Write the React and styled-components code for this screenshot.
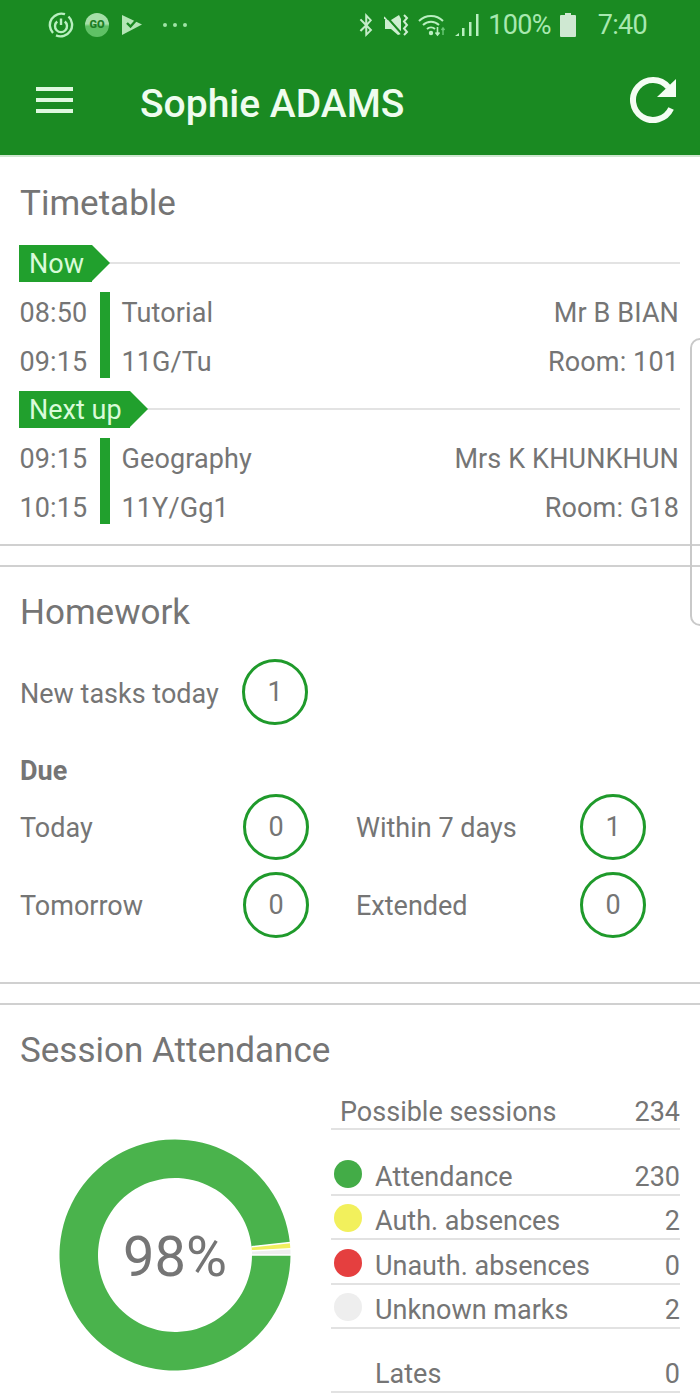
import React from "react";
import styled, { createGlobalStyle } from "styled-components";
import { FaBluetoothB } from "react-icons/fa";

const GlobalStyle = createGlobalStyle`
  html, body {
    margin: 0;
    padding: 0;
    background: #fff;
    overflow: hidden;
  }
  body {
    font-family: Roboto, "Liberation Sans", sans-serif;
    color: #757575;
  }
`;

const polar = (r, deg) => {
  const a = (deg * Math.PI) / 180;
  return [r * Math.cos(a), r * Math.sin(a)];
};

// ring slice, angles clockwise from 3 o'clock
const slicePath = (from, to, outer, inner) => {
  const [x1, y1] = polar(outer, from);
  const [x2, y2] = polar(outer, to);
  const [x3, y3] = polar(inner, to);
  const [x4, y4] = polar(inner, from);
  const large = to - from > 180 ? 1 : 0;
  return `M${x1} ${y1}A${outer} ${outer} 0 ${large} 1 ${x2} ${y2}L${x3} ${y3}A${inner} ${inner} 0 ${large} 0 ${x4} ${y4}Z`;
};

const PowerIcon = () => (
  <svg width="26" height="26" viewBox="0 0 26 26" fill="none" stroke="#b9efc0" strokeWidth="2.4">
    <path d="M20.500 4.500A11.500 11.500 0 0 1 8 23.400" />
    <path d="M5 21A11.500 11.500 0 0 1 17 2.200" />
    <path d="M16.800 9.500a6 6 0 1 1-7.600 0" />
    <path d="M13 6.500v6.500" />
  </svg>
);

const FlagIcon = () => (
  <svg width="22" height="22" viewBox="0 0 22 22">
    <path d="M1 1l20 9.500L1 21z" fill="#b4e6b6" />
    <path d="M6 9l3.500 3.500L18 3" fill="none" stroke="#1a8a22" strokeWidth="2.400" />
  </svg>
);

const MuteIcon = () => (
  <svg width="25" height="24" viewBox="0 0 25 24" fill="none">
    <path d="M1 7l6 0 8-5 2 4v15l-3 1-7-6H1z" fill="#cdeed0" />
    <path d="M1 2l17 19" stroke="#1a8a22" strokeWidth="2" />
    <path d="M0 4l14 16" stroke="#cdeed0" strokeWidth="1.500" />
    <path d="M20 2l3 3-3 3.500 3 3.500-3 3.500 3 3.500-3 3" stroke="#cdeed0" strokeWidth="2" />
  </svg>
);

const WifiIcon = () => (
  <svg width="28" height="26" viewBox="0 0 28 26" fill="none" stroke="#b9efc0" strokeWidth="2">
    <path d="M1 9a17 17 0 0 1 24 0" />
    <path d="M5 13a11.500 11.500 0 0 1 16 0" />
    <path d="M9 17a6 6 0 0 1 8 0" />
    <circle cx="13" cy="21" r="1.200" fill="#b9efc0" />
    <path d="M19.500 15v8M17.500 20.500l2 2.500 2-2.500" strokeWidth="1.600" />
    <path d="M25 23v-7M23.500 18l1.500-2 1.500 2" stroke="#6cc878" strokeWidth="1.400" />
  </svg>
);

const SignalIcon = () => (
  <svg width="24" height="24" viewBox="0 0 24 24" fill="#b9efc0">
    <path d="M0 23l4-3v3z" />
    <rect x="7" y="15" width="2.500" height="8" />
    <rect x="14" y="9" width="2.500" height="14" />
    <rect x="21" y="1" width="2.500" height="22" />
  </svg>
);

const BatteryIcon = () => (
  <svg width="16" height="24" viewBox="0 0 16 24" fill="#cfe8d2">
    <path d="M5 0h6v2h4a1 1 0 0 1 1 1v20a1 1 0 0 1-1 1H1a1 1 0 0 1-1-1V3a1 1 0 0 1 1-1h4z" />
  </svg>
);

const RefreshIcon = () => (
  <RefreshSvg width="50" height="50" viewBox="0 0 50 50" fill="none">
    <path d="M38.300 11.100A20 20 0 1 0 41.100 32.500" stroke="#f4fdf3" strokeWidth="6" />
    <path d="M46 3v18H27z" fill="#f4fdf3" />
  </RefreshSvg>
);

const GREEN = "#21a02d";

function Lesson({ label, start, end, subject, group, teacher, room }) {
  return (
    <>
      <TagRow>
        <Tag>{label}</Tag>
      </TagRow>
      <LessonRow>
        <Times>
          <span>{start}</span>
          <span>{end}</span>
        </Times>
        <LessonBar />
        <LessonInfo>
          <InfoLine>
            <span>{subject}</span>
            <span>{teacher}</span>
          </InfoLine>
          <InfoLine>
            <span>{group}</span>
            <span>{room}</span>
          </InfoLine>
        </LessonInfo>
      </LessonRow>
    </>
  );
}

function Count({ label, value, width }) {
  return (
    <CountCell $width={width}>
      <CountLabel>{label}</CountLabel>
      <Circle>{value}</Circle>
    </CountCell>
  );
}

function Donut() {
  const step = 360 / 234;
  const yellowEnd = -2 * step;
  const greenStart = -4 * step;
  return (
    <svg width="232" height="232" viewBox="-116 -116 232 232">
      <path d={slicePath(0, 360 + greenStart, 115.5, 77)} fill="#4ab34c" />
      <path d={slicePath(greenStart, yellowEnd, 115.5, 77)} fill="#f2ef5e" />
      <path d={slicePath(yellowEnd, 0, 115.5, 77)} fill="#eeeeee" />
      <path d={`M77 0L116 0M${polar(77, yellowEnd)}L${polar(116, yellowEnd)}M${polar(77, greenStart)}L${polar(116, greenStart)}`} stroke="#fff" strokeWidth="1.500" />
    </svg>
  );
}

function StatRow({ dot, label, value }) {
  return (
    <Stat>
      <DotSlot>{dot && <Dot $color={dot} />}</DotSlot>
      <span>{label}</span>
      <StatValue>{value}</StatValue>
    </Stat>
  );
}

export default function App() {
  return (
    <Page>
      <GlobalStyle />
      <TopBar>
        <StatusBar>
          <StatusLeft>
            <PowerIcon />
            <GoBadge>GO</GoBadge>
            <FlagIcon />
            <Dots>
              <i />
              <i />
              <i />
            </Dots>
          </StatusLeft>
          <StatusRight>
            <BluetoothIcon />
            <MuteIcon />
            <WifiIcon />
            <SignalIcon />
            <StatusText>100%</StatusText>
            <BatteryIcon />
            <ClockText>7:40</ClockText>
          </StatusRight>
        </StatusBar>
        <Toolbar>
          <MenuButton>
            <i />
            <i />
            <i />
          </MenuButton>
          <Title>Sophie ADAMS</Title>
          <RefreshIcon />
        </Toolbar>
      </TopBar>

      <TimetableCard>
        <TimetableTitle>Timetable</TimetableTitle>
        <Lesson label="Now" start="08:50" end="09:15" subject="Tutorial" group="11G/Tu" teacher="Mr B BIAN" room="Room: 101" />
        <Lesson label="Next up" start="09:15" end="10:15" subject="Geography" group="11Y/Gg1" teacher="Mrs K KHUNKHUN" room="Room: G18" />
      </TimetableCard>

      <HomeworkCard>
        <CardTitle>Homework</CardTitle>
        <NewTasks>
          <NewTasksLabel>New tasks today</NewTasksLabel>
          <Circle>1</Circle>
        </NewTasks>
        <DueLabel>Due</DueLabel>
        <DueGrid>
          <Count label="Today" value="0" width={336} />
          <Count label="Within 7 days" value="1" width={290} />
          <Count label="Tomorrow" value="0" width={336} />
          <Count label="Extended" value="0" width={290} />
        </DueGrid>
      </HomeworkCard>

      <AttendanceCard>
        <CardTitle>Session Attendance</CardTitle>
        <AttendanceBody>
          <DonutWrap>
            <Donut />
            <DonutLabel>98%</DonutLabel>
          </DonutWrap>
          <StatTable>
            <PossibleRow>
              <span>Possible sessions</span>
              <StatValue>234</StatValue>
            </PossibleRow>
            <StatGroup>
              <StatRow dot="#43ac47" label="Attendance" value="230" />
              <StatRow dot="#f2f05c" label="Auth. absences" value="2" />
              <StatRow dot="#e53f3f" label="Unauth. absences" value="0" />
              <StatRow dot="#eeeeee" label="Unknown marks" value="2" />
            </StatGroup>
            <LatesRow>
              <StatRow label="Lates" value="0" />
            </LatesRow>
          </StatTable>
        </AttendanceBody>
      </AttendanceCard>

      <EdgeHandle />
    </Page>
  );
}

const Page = styled.div`
  position: relative;
  width: 700px;
  height: 1400px;
  overflow: hidden;
  background: #fff;
`;

const TopBar = styled.header`
  height: 157px;
  background: #1a8a22;
  border-bottom: 2px solid #cfe6d0;
  box-sizing: border-box;
`;

const StatusBar = styled.div`
  height: 50px;
  box-sizing: border-box;
  display: flex;
  justify-content: space-between;
  align-items: center;
  padding: 0 53px 0 48px;
`;

const StatusLeft = styled.div`
  display: flex;
  align-items: center;
  gap: 11px;

  svg:nth-child(3) {
    margin-left: 1px;
  }
`;

const GoBadge = styled.div`
  width: 24px;
  height: 24px;
  border-radius: 50%;
  background: linear-gradient(#a5dfa8 0 45%, #5fc165 55%);
  color: #1d7d25;
  font-size: 11px;
  font-weight: 900;
  line-height: 24px;
  text-align: center;
`;

const Dots = styled.div`
  display: flex;
  gap: 6px;
  margin-left: 9px;

  i {
    width: 4px;
    height: 4px;
    border-radius: 50%;
    background: #9fe3a6;
  }
`;

const StatusRight = styled.div`
  display: flex;
  align-items: center;
  gap: 9px;
`;

const BluetoothIcon = styled(FaBluetoothB)`
  width: 18px;
  height: 24px;
  color: #c4ecc8;
`;

const StatusText = styled.span`
  font-size: 27px;
  line-height: 30px;
  letter-spacing: -0.7px;
  color: #a8e8b0;
`;

const ClockText = styled(StatusText)`
  margin-left: 13px;
`;

const Toolbar = styled.div`
  height: 103px;
  display: flex;
  align-items: center;
  padding: 0 20px 0 36px;
`;

const MenuButton = styled.div`
  width: 37px;
  display: flex;
  flex-direction: column;
  gap: 7px;
  margin: 0 67px 3px 0;

  i {
    height: 4px;
    background: #dff8df;
  }
`;

const Title = styled.h1`
  flex: 1;
  margin: 4px 0 0;
  font-size: 39px;
  font-weight: 500;
  color: #effcef;
`;

const RefreshSvg = styled.svg`
  flex: none;
  margin-bottom: 2px;
`;

const Card = styled.section`
  box-sizing: border-box;
  padding: 0 20px;
  border-bottom: 2px solid #d0d0d0;
`;

const CardTitle = styled.h2`
  margin: 0;
  font-size: 35px;
  line-height: 40px;
  font-weight: 400;
  color: #757575;
`;

const TimetableTitle = styled(CardTitle)`
  margin-bottom: 20px;
`;

const TimetableCard = styled(Card)`
  height: 389px;
  padding-top: 27px;
  margin-bottom: 19px;
`;

const TagRow = styled.div`
  display: flex;
  align-items: center;
  height: 38px;
  background: linear-gradient(#e3e3e3, #e3e3e3) center / 100% 2px no-repeat;
`;

const Tag = styled.div`
  position: relative;
  height: 37px;
  padding: 0 8px 0 10px;
  margin: 0 18px 0 -1px;
  background: ${GREEN};
  color: #d9fbd9;
  font-size: 27px;
  line-height: 38px;

  &::after {
    content: "";
    position: absolute;
    left: 100%;
    top: 0;
    border-style: solid;
    border-width: 18.5px 0 18.5px 18px;
    border-color: transparent transparent transparent ${GREEN};
  }
`;

const LessonRow = styled.div`
  display: flex;
  height: 86px;
  margin-top: 10px;
  margin-bottom: 12px;
  font-size: 27px;
  letter-spacing: 0.12px;
  color: #757575;
`;

const Times = styled.div`
  width: 80px;
  height: 89px;
  margin: 1px 0 0 -0.5px;
  display: flex;
  flex-direction: column;
  justify-content: space-between;
  line-height: 40px;
`;

const LessonBar = styled.div`
  width: 10px;
  height: 86px;
  background: ${GREEN};
  margin-right: 12px;
`;

const LessonInfo = styled.div`
  flex: 1;
  height: 89px;
  margin: 1px 1px 0 0;
  display: flex;
  flex-direction: column;
  justify-content: space-between;
`;

const InfoLine = styled.div`
  display: flex;
  justify-content: space-between;
  line-height: 40px;
`;

const HomeworkCard = styled(Card)`
  height: 419px;
  border-top: 2px solid #d0d0d0;
  padding-top: 26px;
  margin-bottom: 19px;
`;

const NewTasks = styled.div`
  display: flex;
  align-items: center;
  margin-top: 26px;
  font-size: 27px;
`;

const NewTasksLabel = styled.span`
  width: 222px;
  margin-top: 4px;
`;

const Circle = styled.div`
  box-sizing: border-box;
  width: 66px;
  height: 66px;
  border: 3px solid #1f9a2b;
  border-radius: 50%;
  display: flex;
  align-items: center;
  justify-content: center;
  font-size: 27px;
  color: #757575;
`;

const DueLabel = styled.div`
  margin-top: 28px;
  font-size: 27px;
  font-weight: 700;
  line-height: 36px;
  color: #757575;
`;

const DueGrid = styled.div`
  display: flex;
  flex-wrap: wrap;
  row-gap: 12px;
  margin-top: 5px;
`;

const CountCell = styled.div`
  width: ${(p) => p.$width}px;
  display: flex;
  justify-content: space-between;
  align-items: center;
  padding-right: 47px;
  box-sizing: border-box;
  font-size: 27px;

  &:nth-child(even) {
    padding-right: 0;
  }
`;

const CountLabel = styled.span`
  margin-top: 2px;
  color: #757575;
`;

const AttendanceCard = styled.section`
  border-top: 2px solid #d0d0d0;
  padding: 26px 20px 0;
`;

const AttendanceBody = styled.div`
  display: flex;
`;

const DonutWrap = styled.div`
  position: relative;
  width: 232px;
  height: 232px;
  margin: 68px 0 0 39px;
`;

const DonutLabel = styled.div`
  position: absolute;
  inset: 0;
  padding-top: 4px;
  display: flex;
  align-items: center;
  justify-content: center;
  font-size: 56px;
  color: #757575;
`;

const StatTable = styled.div`
  width: 349px;
  margin-left: 40px;
  margin-top: 23px;
  font-size: 27px;
  color: #757575;
`;

const PossibleRow = styled.div`
  display: flex;
  justify-content: space-between;
  height: 34px;
  line-height: 36px;
  padding-left: 9px;
  border-bottom: 2px solid #e2e2e2;
`;

const StatGroup = styled.div`
  margin-top: 21px;
`;

const Stat = styled.div`
  box-sizing: border-box;
  display: flex;
  align-items: flex-end;
  height: 44.6px;
  line-height: 34px;
  border-bottom: 2px solid #e2e2e2;
`;

const DotSlot = styled.div`
  width: 44px;
  padding-left: 3px;
  box-sizing: border-box;
`;

const Dot = styled.div`
  width: 28px;
  height: 28px;
  border-radius: 50%;
  background: ${(p) => p.$color};
  margin-bottom: 6px;
`;

const StatValue = styled.span`
  margin-left: auto;
`;

const LatesRow = styled.div`
  margin-top: 19px;
`;

const EdgeHandle = styled.div`
  position: absolute;
  right: -14px;
  top: 338px;
  width: 20px;
  height: 284px;
  border: 2px solid #c9c9c9;
  border-radius: 10px;
`;
